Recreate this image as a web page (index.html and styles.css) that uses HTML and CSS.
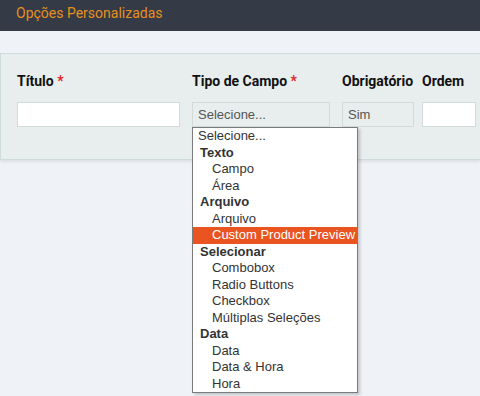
FILE: index.html
```html
<!DOCTYPE html>
<html lang="pt">
<head>
    <meta charset="UTF-8">
    <title>Opções Personalizadas</title>
    <link rel="stylesheet" href="styles.css">
</head>
<body>
    <header class="topbar">
        <h1>Opções Personalizadas</h1>
    </header>

    <div class="panel">
        <div class="col col-title">
            <label>Título <span class="req">*</span></label>
            <input type="text" class="field">
        </div>
        <div class="col col-type">
            <label>Tipo de Campo <span class="req">*</span></label>
            <div class="select">Selecione...</div>
            <!-- Lista aberta do select -->
            <div class="dropdown">
                <div class="opt first">Selecione...</div>
                <div class="group">Texto</div>
                <div class="opt">Campo</div>
                <div class="opt">Área</div>
                <div class="group">Arquivo</div>
                <div class="opt">Arquivo</div>
                <div class="opt active">Custom Product Preview</div>
                <div class="group">Selecionar</div>
                <div class="opt">Combobox</div>
                <div class="opt">Radio Buttons</div>
                <div class="opt">Checkbox</div>
                <div class="opt">Múltiplas Seleções</div>
                <div class="group">Data</div>
                <div class="opt">Data</div>
                <div class="opt">Data &amp; Hora</div>
                <div class="opt">Hora</div>
            </div>
        </div>
        <div class="col col-req">
            <label>Obrigatório</label>
            <div class="select">Sim</div>
        </div>
        <div class="col col-order">
            <label>Ordem</label>
            <input type="text" class="field">
        </div>
    </div>
</body>
</html>
```

FILE: styles.css
```css
html, body {
    height: 100%;
}
body {
    margin: 0;
    background-color: #eff3f8;
    font-family: "Liberation Sans", Arial, sans-serif;
}
.topbar {
    background-color: #343a46;
    height: 31px;
    padding-left: 16px;
}
.topbar h1 {
    margin: 0;
    font-family: Roboto, sans-serif;
    font-weight: normal;
    font-size: 14px;
    line-height: 27px;
    color: #e8901e;
}
.panel {
    margin-top: 22px;
    background-color: #e7eeed;
    border: 1px solid #d0dcdb;
    border-right: none;
    box-shadow: 0 2px 3px rgba(0,0,0,0.08);
    padding: 19px 0 32px 16px;
    display: flex;
    gap: 12px;
}
.col {
    display: flex;
    flex-direction: column;
    position: relative;
}
.col label {
    font-family: Roboto, sans-serif;
    font-weight: bold;
    font-size: 14px;
    line-height: 17px;
    color: #111;
    margin-bottom: 12px;
    white-space: nowrap;
}
.req {
    color: #e02424;
}
.col-title { width: 163px; }
.col-type { width: 138px; }
.col-req { width: 72px; }
.col-order { width: 54px; margin-left: -4px; }
.field {
    box-sizing: border-box;
    height: 25px;
    width: 100%;
    margin: 0;
    border: 1px solid #d3dada;
    background-color: #fff;
}
.select {
    box-sizing: border-box;
    height: 25px;
    border: 1px solid #d3dada;
    background-color: #e7eeed;
    color: #555;
    font-size: 13px;
    line-height: 23px;
    padding-left: 5px;
}
/* Lista aberta */
.dropdown {
    position: absolute;
    top: 54px;
    left: 0;
    width: 164px;
    background-color: #fff;
    border: 1px solid #7b7b7b;
    box-shadow: 2px 2px 3px rgba(0,0,0,0.2);
    font-size: 13px;
    color: #333;
    z-index: 10;
}
.opt, .group {
    height: 16.5px;
    line-height: 16.5px;
    white-space: nowrap;
}
.group {
    font-weight: bold;
    padding-left: 7px;
}
.opt {
    padding-left: 19px;
}
.opt.first {
    padding-left: 5px;
}
.opt.active {
    background-color: #e95420;
    color: #fff;
}
```
